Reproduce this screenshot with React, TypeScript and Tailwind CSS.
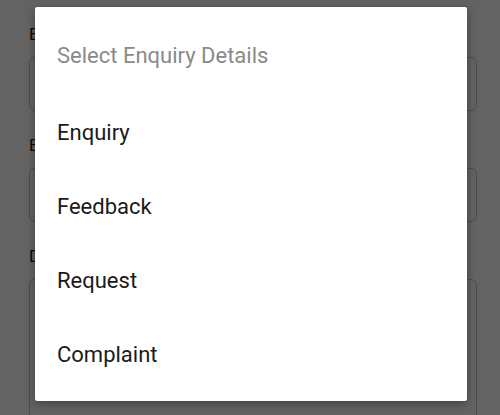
import { ChevronDown } from 'lucide-react';

const options = ['Enquiry', 'Feedback', 'Request', 'Complaint'];

function Field({ label, tall }: { label: string; tall?: boolean }) {
  return (
    <div className="flex flex-col">
      <label className="text-[17px] leading-[22px] text-[#1c1c1c] mb-[12px]">{label}</label>
      <div
        className={
          'relative rounded-[6px] border border-[#c4c4c4] bg-white ' +
          (tall ? 'h-[160px]' : 'h-[54px]')
        }
      >
        {!tall && (
          <ChevronDown className="absolute right-[6px] top-[16px] h-5 w-5 text-[#e0602a]" />
        )}
      </div>
    </div>
  );
}

export default function App() {
  return (
    <div
      className="relative w-[500px] h-[415px] overflow-hidden bg-white"
      style={{ fontFamily: 'Roboto, "Noto Sans", sans-serif' }}
    >
      {/* form behind the dialog */}
      <div className="flex flex-col gap-[23px] pl-[29px] pr-[23px] pt-[23px]">
        <Field label="Enquiry Type" />
        <Field label="Enquiry Details" />
        <Field label="Description" tall />
      </div>

      {/* scrim */}
      <div className="absolute inset-0 bg-black/[0.61]" />

      {/* dialog */}
      <div className="absolute left-[35px] top-[7px] w-[432px] h-[394px] rounded-[2px] bg-white shadow-[0_3px_10px_rgba(0,0,0,0.35)] flex flex-col">
        <div className="px-[22px] pt-[35px] pb-[25px] text-[22px] leading-[28px] text-[#8a8a8a]">
          Select Enquiry Details
        </div>
        {options.map((opt) => (
          <button
            key={opt}
            className="h-[74px] flex items-center px-[22px] text-left text-[22px] text-[#1a1a1a]"
          >
            {opt}
          </button>
        ))}
      </div>
    </div>
  );
}
